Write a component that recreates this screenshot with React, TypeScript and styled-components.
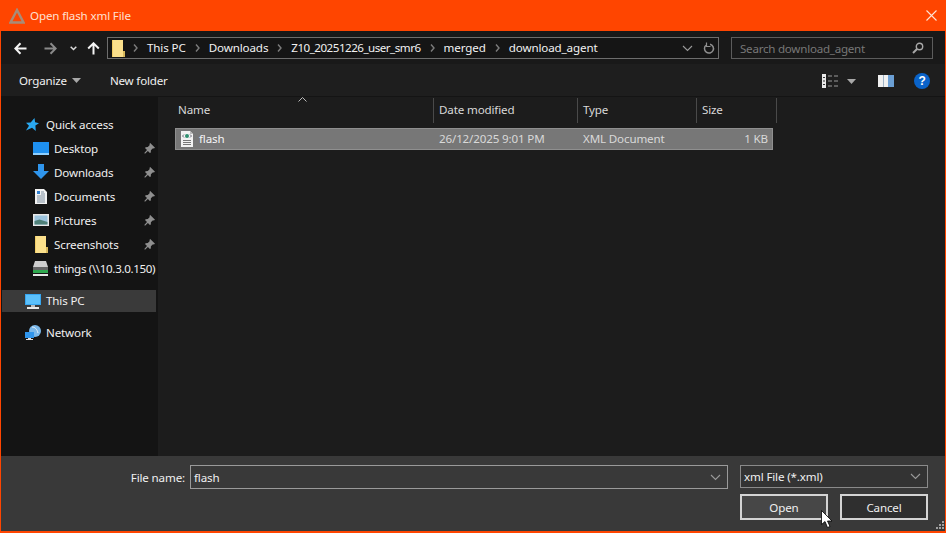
import React from "react";
import styled, { createGlobalStyle } from "styled-components";

const GlobalStyle = createGlobalStyle`
  html, body {
    margin: 0;
    padding: 0;
    background: #ff4500;
  }
  * {
    box-sizing: border-box;
  }
`;

const Window = styled.div`
  width: 946px;
  height: 533px;
  display: flex;
  flex-direction: column;
  position: relative;
  overflow: hidden;
  background: #191919;
  border: solid #ff4500;
  border-width: 0 1px 2px 1px;
  color: #f0f0f0;
  font-family: "Noto Sans", "Open Sans", sans-serif;
  font-size: 11.6px;
  letter-spacing: -0.15px;
`;

const TitleBar = styled.div`
  height: 31px;
  margin: 0 -1px;
  padding: 0 9px 0 9px;
  flex: none;
  display: flex;
  align-items: center;
  gap: 5px;
  background: #ff4500;
  color: #ffe0d0;
`;

const TitleText = styled.span`
  flex: 1;
`;

const NavBar = styled.div`
  height: 33px;
  flex: none;
  padding: 6px 12px 5px 11px;
  display: flex;
  align-items: center;
  background: #191919;
`;

const NavButtons = styled.div`
  width: 95px;
  flex: none;
  display: flex;
  align-items: center;
`;

const NavSlot = styled.span<{ $w: number }>`
  width: ${p => p.$w}px;
  flex: none;
  display: flex;
  justify-content: center;
`;

const AddressBar = styled.div`
  flex: 1;
  height: 22px;
  display: flex;
  align-items: center;
  padding: 0 3px 0 4px;
  border: 1px solid #6d6d6d;
  background: #151515;
`;

const Crumbs = styled.div`
  flex: 1;
  display: flex;
  align-items: center;
`;

const Crumb = styled.span<{ $tight?: boolean }>`
  color: #f2f2f2;
  margin: 0 9px;
  padding-bottom: 1px;
  white-space: nowrap;
  letter-spacing: ${p => (p.$tight ? "-0.5px" : "-0.12px")};
`;

const SearchBox = styled.div`
  width: 202px;
  height: 22px;
  margin-left: 12px;
  padding: 0 8px;
  flex: none;
  display: flex;
  align-items: center;
  justify-content: space-between;
  border: 1px solid #5c5c5c;
  color: #777;
  letter-spacing: -0.25px;
`;

const Toolbar = styled.div`
  height: 32px;
  flex: none;
  padding: 0 15px 0 18px;
  display: flex;
  align-items: center;
  background: #1e1e1e;
  letter-spacing: -0.2px;
`;

const ToolButton = styled.span`
  display: flex;
  align-items: center;
  gap: 5px;
  margin-right: 29px;
`;

const ToolIcons = styled.div`
  margin-left: auto;
  display: flex;
  align-items: center;
  padding-top: 2px;
`;

const Main = styled.div`
  flex: 1;
  min-height: 0;
  display: flex;
  border-top: 1px solid #141414;
`;

const Sidebar = styled.nav`
  width: 159px;
  flex: none;
  padding: 15px 0 0 1px;
  background: #141414;
  border-right: 2px solid #1d1d1d;
  overflow: hidden;
`;

const SideRow = styled.div<{ $child?: boolean; $active?: boolean; $gap?: number }>`
  height: ${p => (p.$active ? 22 : 24)}px;
  width: 154px;
  margin-top: ${p => p.$gap ?? 0}px;
  padding-left: ${p => (p.$child ? 31 : 23)}px;
  display: flex;
  align-items: center;
  background: ${p => (p.$active ? "#3a3a3a" : "transparent")};
  white-space: nowrap;
`;

const SideIcon = styled.span`
  width: 21px;
  flex: none;
  display: flex;
  align-items: center;
`;

const SideLabel = styled.span<{ $tight?: boolean; $lift?: boolean }>`
  flex: 1;
  min-width: 0;
  padding-bottom: ${p => (p.$lift ? 2 : 0)}px;
  letter-spacing: ${p => (p.$tight ? "-0.35px" : "inherit")};
`;

const Pin = styled.span`
  width: 14px;
  margin-right: -2px;
  flex: none;
  display: flex;
`;

const FilePane = styled.section`
  flex: 1;
  position: relative;
  background: #1c1c1c;
  padding: 1px 0 0 16px;
`;

const SortArrow = styled.svg`
  position: absolute;
  left: 138px;
  top: 0;
`;

const HeaderRow = styled.div`
  height: 25px;
  display: flex;
`;

const HeaderCell = styled.div<{ $w: number; $first?: boolean }>`
  width: ${p => p.$w}px;
  padding: 0 0 2px ${p => (p.$first ? 2 : 5)}px;
  display: flex;
  align-items: center;
  color: #d8d8d8;
  border-right: 1px solid #4a4a4a;
`;

const FileRow = styled.div`
  width: 598px;
  height: 22px;
  margin: 5px 0 0 -1px;
  padding-bottom: 1px;
  display: flex;
  align-items: center;
  background: #777;
  border: 1px solid #8f8f8f;
  color: #d9d9d9;
`;

const FileName = styled.span`
  width: 263px;
  flex: none;
  padding-left: 4px;
  display: flex;
  align-items: center;
  gap: 5px;
  color: #f4f4f4;
`;

const FileCell = styled.span<{ $w: number; $right?: boolean }>`
  width: ${p => p.$w}px;
  flex: none;
  text-align: ${p => (p.$right ? "right" : "left")};
`;

const Footer = styled.div`
  height: 75px;
  flex: none;
  padding: 9px 0 0 0;
  display: grid;
  grid-template-columns: 186px 541px 188px;
  grid-template-rows: 24px 26px;
  row-gap: 5px;
  background: #393939;
  position: relative;
`;

const FieldLabel = styled.label`
  padding-right: 2px;
  display: flex;
  align-items: center;
  justify-content: flex-end;
  height: 24px;
`;

const NameInput = styled.div`
  margin-left: 3px;
  padding: 0 6px 0 3px;
  display: flex;
  align-items: center;
  justify-content: space-between;
  border: 1px solid #9a9a9a;
  background: #393939;
`;

const FilterSelect = styled.div`
  margin-left: 12px;
  width: 188px;
  height: 23px;
  padding: 0 6px 0 3px;
  display: flex;
  align-items: center;
  justify-content: space-between;
  border: 1px solid #8a8a8a;
  background: #333;
`;

const Buttons = styled.div`
  grid-column: 3;
  margin-left: 12px;
  width: 188px;
  display: flex;
  justify-content: space-between;
`;

const DialogButton = styled.div<{ $primary?: boolean }>`
  width: 88px;
  height: 26px;
  display: flex;
  align-items: center;
  justify-content: center;
  border: 2px solid #d4d4d4;
  background: ${p => (p.$primary ? "#474747" : "#2f2f2f")};
`;

const Cursor = styled.svg`
  position: absolute;
  left: 820px;
  top: 510px;
`;

const Grip = styled.svg`
  position: absolute;
  right: 1px;
  bottom: 1px;
`;

const Caret = () => (
  <svg width="9" height="5" viewBox="0 0 9 5"><path d="M0 0h9L4.5 5z" fill="#a8a8a8" /></svg>
);

const Chevron = () => (
  <svg width="11" height="7" viewBox="0 0 11 7" fill="none"><path d="M1 1l4.5 4.5L10 1" stroke="#9a9a9a" strokeWidth="1.1" /></svg>
);

const Sep = () => (
  <svg width="5" height="8" viewBox="0 0 5 8" fill="none"><path d="M1 .5L4 4 1 7.5" stroke="#7c7c7c" strokeWidth="1.4" /></svg>
);

const PinIcon = () => (
  <svg width="11" height="11" viewBox="0 0 11 11" fill="#8f8f8f">
    <path d="M6.2 0L11 4.8 9.9 5.6 9 5.2 6.9 7.3 6.8 9.4 5.9 10 3.9 8 1 10.8.3 10 3 7.1 1 5.1 1.7 4.2 3.8 4.1 5.8 2 5.4 1z" />
  </svg>
);

const ArrowIcon = ({ dir, color }: { dir: "left" | "right" | "up"; color: string }) => {
  const rotate = dir === "left" ? 0 : dir === "right" ? 180 : 90;
  return (
    <svg width="13" height="13" viewBox="0 0 13 13" fill="none" style={{ transform: `rotate(${rotate}deg)` }}>
      <path d="M12.5 6.5H1.5M6.5 1.2L1.3 6.5l5.2 5.3" stroke={color} strokeWidth="2" />
    </svg>
  );
};

const FolderIcon = () => (
  <svg width="13" height="17" viewBox="0 0 13 17">
    <path d="M0 0h11v17H0z" fill="#fbe08c" />
    <path d="M11 11h2v6h-2z" fill="#d9b95c" />
    <path d="M0 0h1v17H0z" fill="#f2cd66" />
  </svg>
);

const XmlIcon = () => (
  <svg width="14" height="16" viewBox="0 0 14 16">
    <path d="M1 0h9l3 3v13H1z" fill="#f2f2f2" />
    <path d="M10 0l3 3h-3z" fill="#bbb" />
    <circle cx="7" cy="5" r="2" fill="#2f8f6f" />
    <path d="M4 3.500L2.500 5 4 6.500M10 3.500L11.500 5 10 6.500" stroke="#445" strokeWidth=".8" fill="none" />
    <path d="M3 9.500h8M3 11.500h8M3 13.500h8" stroke="#777" />
  </svg>
);

const sideItems: { label: string; icon: React.ReactNode; pin?: boolean }[] = [
  {
    label: "Desktop",
    pin: true,
    icon: (
      <svg width="16" height="13" viewBox="0 0 16 13">
        <path d="M0 0h16v12H0z" fill="#1e90f0" />
        <path d="M0 11h16v2H0z" fill="#8fd0ff" />
      </svg>
    )
  },
  {
    label: "Downloads",
    pin: true,
    icon: (
      <svg width="16" height="16" viewBox="0 0 16 16"><path d="M5 0h6v7h5l-8 8-8-8h5z" fill="#2f95ec" /></svg>
    )
  },
  {
    label: "Documents",
    pin: true,
    icon: (
      <svg width="16" height="15" viewBox="0 0 16 15">
        <path d="M2 0h9l3 3v12H2z" fill="#f2f2f2" />
        <path d="M4 2h3v3H4z" fill="#2f7fd0" />
        <path d="M4 7h8M4 9h8M4 11h8M4 13h8M8 3h3M8 5h4" stroke="#7f8f9f" />
      </svg>
    )
  },
  {
    label: "Pictures",
    pin: true,
    icon: (
      <svg width="16" height="12" viewBox="0 0 16 12">
        <path d="M0 0h16v12H0z" fill="#e8e8e8" />
        <path d="M1.500 1.500h13v9h-13z" fill="#9cc4de" />
        <path d="M1.500 7l5-1.500 8 2.500v2.500h-13z" fill="#4f8078" />
      </svg>
    )
  },
  {
    label: "Screenshots",
    pin: true,
    icon: (
      <span style={{ marginLeft: 2, display: "flex" }}>
        <FolderIcon />
      </span>
    )
  },
  {
    label: "things (\\\\10.3.0.150)",
    icon: (
      <svg width="15" height="15" viewBox="0 0 15 15">
        <path d="M2 0h11l2 6H0z" fill="#cfcfcf" />
        <path d="M0 6h15v3H0z" fill="#666" />
        <path d="M0 9h15v3H0z" fill="#2fa84f" />
        <path d="M0 13h15v2H0z" fill="#e6e6e6" />
      </svg>
    )
  }
];

const App = () => (
  <>
    <GlobalStyle />
    <Window>
      <TitleBar>
        <svg width="16" height="16" viewBox="0 0 16 16" fill="none">
          <path d="M8 2L1.500 14.500h13z" stroke="#a88c78" strokeWidth="2.4" />
        </svg>
        <TitleText>Open flash xml File</TitleText>
        <svg width="11" height="11" viewBox="0 0 11 11" fill="none">
          <path d="M.5.500l10 10M10.500.500l-10 10" stroke="#ffe3d4" strokeWidth="1.1" />
        </svg>
      </TitleBar>

      <NavBar>
        <NavButtons>
          <NavSlot $w={16}>
            <ArrowIcon dir="left" color="#f5f5f5" />
          </NavSlot>
          <NavSlot $w={44}>
            <ArrowIcon dir="right" color="#8a8a8a" />
          </NavSlot>
          <NavSlot $w={3}>
            <svg width="7" height="5" viewBox="0 0 7 5" fill="none" style={{ flex: "none" }}><path d="M.7.700L3.500 3.500 6.300.700" stroke="#ddd" strokeWidth="1.500" /></svg>
          </NavSlot>
          <NavSlot $w={37}>
            <ArrowIcon dir="up" color="#f5f5f5" />
          </NavSlot>
        </NavButtons>
        <AddressBar>
          <FolderIcon />
          <Crumbs>
            <span style={{ width: 8 }} />
            <Sep />
            <Crumb>This PC</Crumb>
            <Sep />
            <Crumb>Downloads</Crumb>
            <Sep />
            <Crumb $tight>Z10_20251226_user_smr6</Crumb>
            <Sep />
            <Crumb>merged</Crumb>
            <Sep />
            <Crumb>download_agent</Crumb>
          </Crumbs>
          <Chevron />
          <svg width="12" height="13" viewBox="0 0 12 13" fill="none" style={{ marginLeft: 10 }}>
            <path d="M7 2.200A4.500 4.500 0 1 1 3 3.200" stroke="#8f8f8f" strokeWidth="1.500" />
            <path d="M3.500.500V4.500H7.500" stroke="#8f8f8f" strokeWidth="1.200" />
          </svg>
        </AddressBar>
        <SearchBox>
          <span>Search download_agent</span>
          <svg width="12" height="12" viewBox="0 0 12 12" fill="none">
            <circle cx="7.500" cy="4.500" r="3.200" stroke="#a8a8a8" strokeWidth="1.400" />
            <path d="M5 7L1 11" stroke="#a8a8a8" strokeWidth="2" />
          </svg>
        </SearchBox>
      </NavBar>

      <Toolbar>
        <ToolButton>
          Organize
          <Caret />
        </ToolButton>
        <ToolButton>New folder</ToolButton>
        <ToolIcons>
          <svg width="16" height="14" viewBox="0 0 16 14" fill="none">
            <path d="M0 0h4v14H0z" fill="#e8e8e8" />
            <path d="M1 3.500h2M1 7h2M1 10.500h2" stroke="#333" />
            <path d="M6 2h4M12 2h4M6 7h4M12 7h4M6 12h4M12 12h4" stroke="#9a9a9a" />
          </svg>
          <span style={{ margin: "0 22px 0 9px", display: "flex" }}>
            <Caret />
          </span>
          <svg width="16" height="12" viewBox="0 0 16 12">
            <path d="M0 0h16v12H0z" fill="#f0f0f0" />
            <path d="M10 0h6v12h-6z" fill="#6b9fd4" />
            <path d="M5 0h1v12H5z" fill="#9fb4c8" />
          </svg>
          <svg width="16" height="16" viewBox="0 0 16 16" style={{ marginLeft: 20 }}>
            <circle cx="8" cy="8" r="8" fill="#0a63c9" />
            <text x="8" y="12" textAnchor="middle" fontSize="12" fontWeight="700" fill="#fff" fontFamily="Liberation Sans, sans-serif">?</text>
          </svg>
        </ToolIcons>
      </Toolbar>

      <Main>
        <Sidebar>
          <SideRow>
            <SideIcon>
              <svg width="14" height="13" viewBox="0 0 14 13"><path d="M9.500 0l.6 4.200L14 5.200l-3.600 2.300.4 5.500L7 9.800 1 12.500l3-4.800L1 4.800l4.700-.3z" fill="#2aa8f0" /></svg>
            </SideIcon>
            <SideLabel>Quick access</SideLabel>
          </SideRow>
          {sideItems.map(item => (
            <SideRow $child key={item.label}>
              <SideIcon>{item.icon}</SideIcon>
              <SideLabel $tight={!item.pin}>{item.label}</SideLabel>
              {item.pin && (
                <Pin>
                  <PinIcon />
                </Pin>
              )}
            </SideRow>
          ))}
          <SideRow $active $gap={10}>
            <SideIcon>
              <svg width="16" height="15" viewBox="0 0 16 15">
                <path d="M0 0h16v11H0z" fill="#37a6f0" />
                <path d="M1 1h14v9H1z" fill="#5cc0fa" />
                <path d="M6 11h4v2H6z" fill="#bbb" />
                <path d="M2 13h12v2H2z" fill="#e8e8e8" />
              </svg>
            </SideIcon>
            <SideLabel $lift>This PC</SideLabel>
          </SideRow>
          <SideRow $gap={9}>
            <SideIcon>
              <svg width="16" height="16" viewBox="0 0 16 16">
                <circle cx="10" cy="6" r="6" fill="#7ab8ea" />
                <path d="M7 2c3 0 5 2 6 6" stroke="#e8f2fa" fill="none" />
                <path d="M0 7h9v6H0z" fill="#2f95ec" />
                <path d="M3 13h3v1H3zM1 14h7v1H1z" fill="#ddd" />
              </svg>
            </SideIcon>
            <SideLabel $lift>Network</SideLabel>
          </SideRow>
        </Sidebar>

        <FilePane>
          <SortArrow width="9" height="5" viewBox="0 0 9 5" fill="none">
            <path d="M.5 4.500l4-4 4 4" stroke="#bbb" />
          </SortArrow>
          <HeaderRow>
            <HeaderCell $w={258} $first>Name</HeaderCell>
            <HeaderCell $w={144}>Date modified</HeaderCell>
            <HeaderCell $w={119}>Type</HeaderCell>
            <HeaderCell $w={80}>Size</HeaderCell>
          </HeaderRow>
          <FileRow>
            <FileName>
              <XmlIcon />
              flash
            </FileName>
            <FileCell $w={144}>26/12/2025 9:01 PM</FileCell>
            <FileCell $w={120}>XML Document</FileCell>
            <FileCell $w={65} $right>1 KB</FileCell>
          </FileRow>
        </FilePane>
      </Main>

      <Footer>
        <FieldLabel>File name:</FieldLabel>
        <NameInput>
          flash
          <Chevron />
        </NameInput>
        <FilterSelect>
          xml File (*.xml)
          <Chevron />
        </FilterSelect>
        <Buttons>
          <DialogButton $primary>Open</DialogButton>
          <DialogButton>Cancel</DialogButton>
        </Buttons>
        <Grip width="9" height="9" viewBox="0 0 9 9" fill="#a0a0a0">
          <path d="M7 0h2v2H7zM4 3h2v2H4zM7 3h2v2H7zM1 6h2v2H1zM4 6h2v2H4zM7 6h2v2H7z" />
        </Grip>
      </Footer>

      <Cursor width="12" height="18" viewBox="0 0 12 18">
        <path d="M.5.500v14l3.500-3 2.500 6 2.500-1-2.500-5.500H11z" fill="#fff" stroke="#000" strokeWidth=".8" />
      </Cursor>
    </Window>
  </>
);

export default App;
